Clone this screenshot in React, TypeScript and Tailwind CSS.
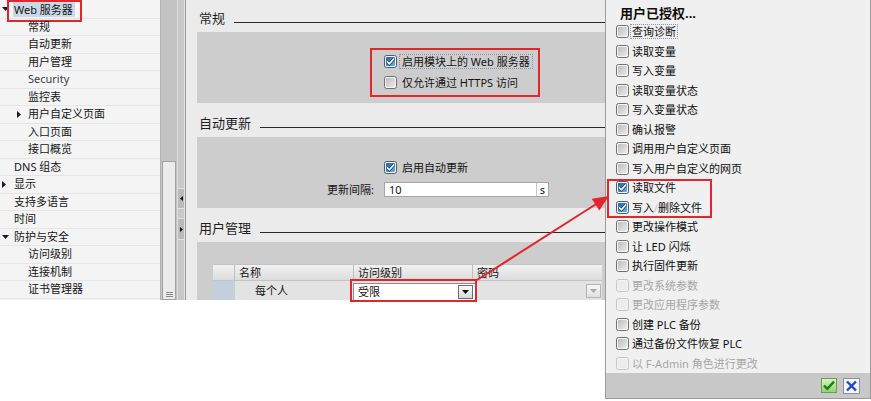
import React from "react";

type CbState = "on" | "off" | "dis";

function Box({ state }: { state: CbState }) {
  if (state === "on") {
    return (
      <svg width="13" height="13" viewBox="0 0 13 13" className="shrink-0">
        <rect x="0.5" y="0.5" width="12" height="12" rx="2" fill="#eef3f8" stroke="#4d5c6c" />
        <rect x="2" y="2" width="9" height="9" rx="1" fill="url(#cbBlue)" />
        <path d="M3 6.4 L5.3 8.8 L10 3.6" fill="none" stroke="#1b2f48" strokeWidth="3" />
        <path d="M3 6.4 L5.3 8.8 L10 3.6" fill="none" stroke="#ffffff" strokeWidth="1.6" />
      </svg>
    );
  }
  if (state === "dis") {
    return (
      <svg width="13" height="13" viewBox="0 0 13 13" className="shrink-0">
        <rect x="0.5" y="0.5" width="12" height="12" rx="2" fill="#f2f2f2" stroke="#c6c6c6" />
        <rect x="2" y="2" width="9" height="9" rx="1" fill="#ececec" />
      </svg>
    );
  }
  return (
    <svg width="13" height="13" viewBox="0 0 13 13" className="shrink-0">
      <rect x="0.5" y="0.5" width="12" height="12" rx="2" fill="#f4f4f4" stroke="#707070" />
      <rect x="2" y="2" width="9" height="9" rx="1" fill="url(#cbGray)" />
    </svg>
  );
}

function DownTri({ color = "#1a1a1a" }: { color?: string }) {
  return (
    <svg width="7" height="4" viewBox="0 0 7 4">
      <path d="M0 0H7L3.5 4Z" fill={color} />
    </svg>
  );
}

function RightTri() {
  return (
    <svg width="4" height="7" viewBox="0 0 4 7">
      <path d="M0 0L4 3.5L0 7Z" fill="#1a1a1a" />
    </svg>
  );
}

type Node = { level: 0 | 1; text: string; exp?: "down" | "right"; sel?: boolean };

const tree: Node[] = [
  { level: 0, text: "Web 服务器", exp: "down", sel: true },
  { level: 1, text: "常规" },
  { level: 1, text: "自动更新" },
  { level: 1, text: "用户管理" },
  { level: 1, text: "Security" },
  { level: 1, text: "监控表" },
  { level: 1, text: "用户自定义页面", exp: "right" },
  { level: 1, text: "入口页面" },
  { level: 1, text: "接口概览" },
  { level: 0, text: "DNS 组态" },
  { level: 0, text: "显示", exp: "right" },
  { level: 0, text: "支持多语言" },
  { level: 0, text: "时间" },
  { level: 0, text: "防护与安全", exp: "down" },
  { level: 1, text: "访问级别" },
  { level: 1, text: "连接机制" },
  { level: 1, text: "证书管理器" },
];

function TreeRow({ n }: { n: Node }) {
  return (
    <div className="relative h-[17.5px] flex items-center border-b border-[#e5e5e5] text-[11px] leading-[14px] text-[#141414]">
      <div className={n.level === 0 ? "w-[2px] shrink-0" : "w-[17px] shrink-0"} />
      <div className={n.level === 0 ? "w-[12px] shrink-0 flex items-center" : "w-[11px] shrink-0 flex items-center"}>
        {n.exp === "down" && <DownTri />}
        {n.exp === "right" && <RightTri />}
      </div>
      {n.sel ? (
        <span className="bg-[#cbd8e6] pl-[1px] pr-[2px] -ml-[1px] leading-[15px]">{n.text}</span>
      ) : (
        <span className={n.text === "Security" ? "text-[#3a3f4a]" : ""}>{n.text}</span>
      )}
      {n.sel && <div className="absolute left-[7px] top-[-1px] w-[75px] h-[22px] border-2 border-[#e2262c]" />}
    </div>
  );
}

function SectionTitle({ title, first }: { title: string; first?: boolean }) {
  return (
    <div className={(first ? "mt-[10px]" : "mt-[12px]") + " flex items-end h-[16px] pl-[2px]"}>
      <span className="text-[13px] leading-[16px] text-[#1e1e1e]">{title}</span>
      <div className="flex-1 h-px bg-[#2a2a2a] ml-[9px] mb-[3px]" />
    </div>
  );
}

const perms: { t: React.ReactNode; s: CbState; focus?: boolean }[] = [
  { t: "查询诊断", s: "off", focus: true },
  { t: "读取变量", s: "off" },
  { t: "写入变量", s: "off" },
  { t: "读取变量状态", s: "off" },
  { t: "写入变量状态", s: "off" },
  { t: "确认报警", s: "off" },
  { t: "调用用户自定义页面", s: "off" },
  { t: "写入用户自定义的网页", s: "off" },
  { t: "读取文件", s: "on" },
  {
    t: (
      <>
        写入<span className="text-[#c8c8c8]">/</span>删除文件
      </>
    ),
    s: "on",
  },
  { t: "更改操作模式", s: "off" },
  { t: "让 LED 闪烁", s: "off" },
  { t: "执行固件更新", s: "off" },
  { t: "更改系统参数", s: "dis" },
  { t: "更改应用程序参数", s: "dis" },
  { t: "创建 PLC 备份", s: "off" },
  { t: "通过备份文件恢复 PLC", s: "off" },
  { t: "以 F-Admin 角色进行更改", s: "dis" },
];

function DropBtn({ disabled }: { disabled?: boolean }) {
  return (
    <div
      className={
        "w-[15px] h-[14px] flex items-center justify-center border " +
        (disabled
          ? "border-[#b4b4b4] bg-linear-to-b from-[#f6f6f6] to-[#e0e0e0]"
          : "border-[#6e6e6e] bg-linear-to-b from-[#fafafa] to-[#d8d8d8]")
      }
    >
      <DownTri color={disabled ? "#a8a8a8" : "#111"} />
    </div>
  );
}

export default function App() {
  return (
    <div className="relative w-[871px] h-[401px] bg-white overflow-hidden flex font-['Noto_Sans','Noto_Sans_CJK_SC',sans-serif]">
      <svg width="0" height="0" className="absolute">
        <defs>
          <linearGradient id="cbBlue" x1="0" y1="0" x2="1" y2="1">
            <stop offset="0" stopColor="#1f5fb4" />
            <stop offset="1" stopColor="#5fb6ee" />
          </linearGradient>
          <linearGradient id="cbGray" x1="0" y1="0" x2="1" y2="1">
            <stop offset="0" stopColor="#bdbdbd" />
            <stop offset="1" stopColor="#ebebeb" />
          </linearGradient>
          <linearGradient id="okGreen" x1="0" y1="0" x2="0" y2="1">
            <stop offset="0" stopColor="#d9f5c4" />
            <stop offset="1" stopColor="#8fd46a" />
          </linearGradient>
        </defs>
      </svg>

      {/* Left: tree + editor */}
      <div className="w-[605px] h-[300px] flex shrink-0">
        {/* tree */}
        <div className="w-[161px] h-full bg-[#f4f4f4] border-r border-[#b4b4b4] pt-[1px] shrink-0">
          {tree.map((n, i) => (
            <TreeRow key={i} n={n} />
          ))}
        </div>
        {/* scrollbar */}
        <div className="w-[16px] h-full bg-[#c3c3c3] flex flex-col shrink-0">
          <div className="h-[161px]" />
          <div className="flex-1 mx-[1px] bg-[#ebebeb] border border-[#a2a2a2] flex flex-col items-center justify-end pb-[2px]">
            <div className="flex flex-col gap-[1px] mb-[0px]">
              <div className="w-[7px] h-px bg-[#8a8a8a]" />
              <div className="w-[7px] h-px bg-[#8a8a8a]" />
              <div className="w-[7px] h-px bg-[#8a8a8a]" />
            </div>
          </div>
        </div>
        {/* splitter */}
        <div className="w-[9px] h-full flex shrink-0">
          <div className="w-px bg-[#dcdcdc]" />
          <div className="w-[6px] bg-[#c8c8c8] flex flex-col">
            <div className="h-[188px]" />
            <div className="h-[21px] bg-[#bababa] border-y border-[#e2e2e2] flex items-center justify-center">
              <svg width="3" height="5" viewBox="0 0 3 5">
                <path d="M3 0L0 2.5L3 5Z" fill="#111" />
              </svg>
            </div>
            <div className="h-[9px]" />
            <div className="h-[22px] bg-[#bababa] border-y border-[#e2e2e2] flex items-center justify-center">
              <svg width="3" height="5" viewBox="0 0 3 5">
                <path d="M0 0L3 2.5L0 5Z" fill="#111" />
              </svg>
            </div>
          </div>
          <div className="w-px bg-[#e0e0e0]" />
          <div className="w-px bg-[#9c9c9c]" />
        </div>
        {/* editor */}
        <div className="flex-1 h-full bg-[#ebebeb] pl-[11px] flex flex-col text-[11px] text-[#141414]">
          <SectionTitle title="常规" first />
          <div className="relative mt-[6px] h-[71px] bg-[#cdcdcd] flex flex-col pt-[21px] pl-[187px] gap-[4px]">
            <div className="h-[17px] flex items-center">
              <Box state="on" />
              <span className="ml-[2px] px-[2px] border border-dotted border-[#7d93aa] leading-[13px]">
                启用模块上的 Web 服务器
              </span>
            </div>
            <div className="h-[17px] flex items-center">
              <Box state="off" />
              <span className="ml-[5px] leading-[13px]">仅允许通过 HTTPS 访问</span>
            </div>
            <div className="absolute left-[173px] top-[16px] w-[170px] h-[49px] border-2 border-[#e2262c]" />
          </div>

          <SectionTitle title="自动更新" />
          <div className="mt-[6px] h-[71px] bg-[#cdcdcd] flex flex-col pt-[22px]">
            <div className="h-[17px] flex items-center pl-[187px]">
              <Box state="on" />
              <span className="ml-[5px] leading-[13px]">启用自动更新</span>
            </div>
            <div className="mt-[6px] h-[15px] flex items-center">
              <div className="w-[177px] text-right leading-[13px]">更新间隔:</div>
              <div className="ml-[10px] w-[165px] h-[15px] bg-white border border-[#a6a6a6] flex items-center">
                <span className="flex-1 pl-[4px] leading-[13px]">10</span>
                <span className="w-[12px] h-full border-l border-[#c8c8c8] text-center leading-[13px]">s</span>
              </div>
            </div>
          </div>

          <SectionTitle title="用户管理" />
          <div className="mt-[6px] flex-1 bg-[#cdcdcd] pt-[22px] pl-[16px]">
            <div className="w-[389px] flex flex-col">
              <div className="flex h-[17px] bg-linear-to-b from-[#f2f2f2] to-[#dcdcdc] border-y border-[#c4c4c4] leading-[15px]">
                <div className="w-[22px] border-r border-[#bdbdbd]" />
                <div className="w-[119px] border-r border-[#bdbdbd] pl-[4px]">名称</div>
                <div className="w-[119px] border-r border-[#bdbdbd] pl-[4px]">访问级别</div>
                <div className="flex-1 pl-[4px]">密码</div>
              </div>
              <div className="flex h-[19px] bg-[#e3e3e3]">
                <div className="w-[22px] bg-[#c3cfdc]" />
                <div className="w-[119px] pl-[20px] flex items-center leading-[14px]">每个人</div>
                <div className="relative w-[119px] pt-[2px]">
                  <div className="h-[17px] -ml-[1px] mr-[-2px] bg-white border-l border-t border-[#8c8c8c] flex items-center pl-[4px]">
                    <span className="flex-1 leading-[14px]">受限</span>
                    <div className="mr-[2px]">
                      <DropBtn />
                    </div>
                  </div>
                  <div className="absolute left-[-4px] top-[-2px] w-[127px] h-[23px] border-2 border-[#e2262c]" />
                </div>
                <div className="flex-1 flex justify-end items-start pt-[3px] pr-[1px]">
                  <DropBtn disabled />
                </div>
              </div>
            </div>
          </div>
        </div>
      </div>

      {/* Popup */}
      <div className="relative w-[266px] h-[399px] bg-[#f0f0f0] border-l border-r border-b border-[#9a9a9a] flex flex-col shrink-0 text-[#0e0e0e]">
        <div className="mt-[3px] h-[19px] pl-[14px] flex items-center text-[13px] font-bold leading-[16px]">
          用户已授权...
        </div>
        {perms.map((p, i) => (
          <div key={i} className="h-[19.5px] flex items-center pl-[10px] text-[11px] leading-[13px] shrink-0">
            <Box state={p.s} />
            <span
              className={
                (p.focus ? "ml-[1px] px-[1px] border border-dotted border-[#8096ad] " : "ml-[3px] ") +
                (p.s === "dis" ? "text-[#a6a6a6]" : "")
              }
            >
              {p.t}
            </span>
          </div>
        ))}
        <div className="mt-auto h-[25px] bg-[#c8c8c8] flex items-center justify-end pr-[10px] gap-[6px]">
          <svg width="16" height="15" viewBox="0 0 16 15">
            <rect x="0.5" y="0.5" width="15" height="14" fill="url(#okGreen)" stroke="#6c9a58" />
            <path d="M3 7.5 L6.3 10.8 L13 3.6" fill="none" stroke="#1d7a1d" strokeWidth="2.4" />
          </svg>
          <svg width="17" height="16" viewBox="0 0 17 16">
            <rect x="0.5" y="0.5" width="16" height="15" fill="#f4f6fa" stroke="#8a93a6" />
            <path d="M4 3.5 L13 12.5 M13 3.5 L4 12.5" fill="none" stroke="#1f49c8" strokeWidth="2.4" />
          </svg>
        </div>
        <div className="absolute left-[1px] top-[179px] w-[105px] h-[39px] border-2 border-[#e2262c]" />
      </div>

      {/* annotation arrow */}
      <svg className="absolute inset-0 pointer-events-none" width="871" height="401" viewBox="0 0 871 401">
        <line x1="477" y1="280" x2="597" y2="203.5" stroke="#e2262c" strokeWidth="2" />
        <polygon points="609,196 599.3,210.5 591.7,198.7" fill="#e2262c" />
      </svg>
    </div>
  );
}
